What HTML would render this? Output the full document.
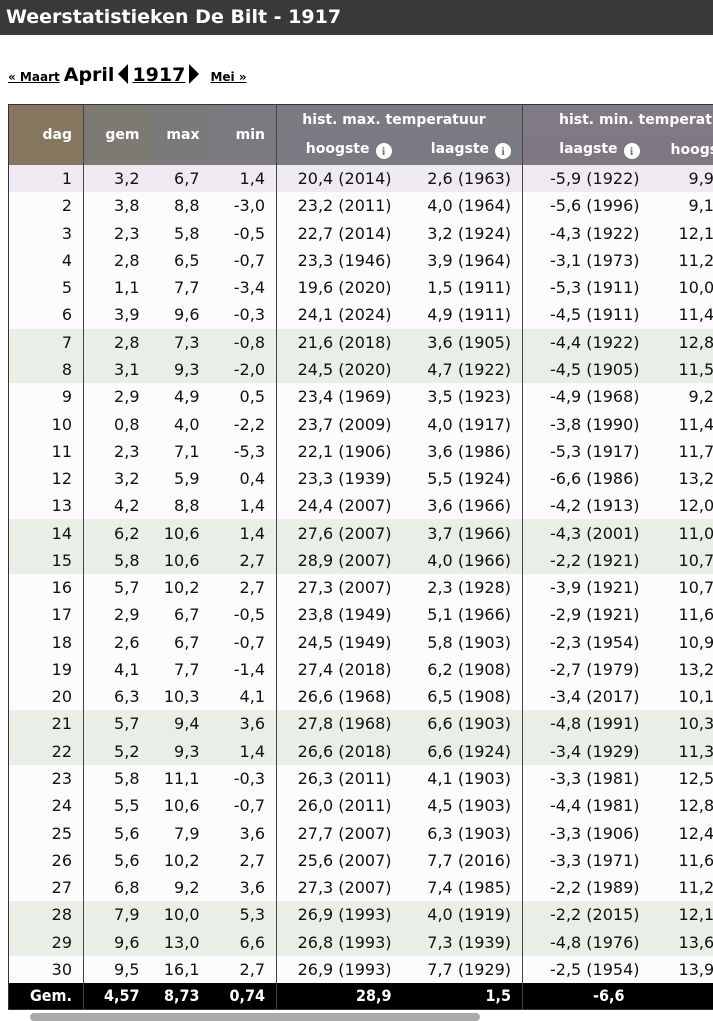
<!DOCTYPE html>
<html><head><meta charset="utf-8"><style>
body{margin:0;width:713px;height:1018px;overflow:hidden;background:#fff;font-family:"DejaVu Sans",Verdana,sans-serif;position:relative}
.top{height:35px;background:#393939;color:#fff;font-weight:bold;font-size:19px;line-height:34px;padding-left:6px;white-space:nowrap}
.nav{position:absolute;top:64px;left:8px;white-space:nowrap;font-weight:bold}
.nav a{color:#000;text-decoration:underline;font-size:12px}
.nav .m{font-size:19px;margin:0 4px 0 4px}
.tri{display:inline-block;width:0;height:0;border-top:10px solid transparent;border-bottom:10px solid transparent;vertical-align:-3px}
.yr{font-size:19px;text-decoration:underline;margin:0 4px}
table{position:absolute;top:104px;left:8px;border-collapse:collapse;font-size:16px;color:#111;table-layout:fixed;width:760px;border:1px solid #333}
td,th{padding:0 11px 0 0;text-align:right;white-space:nowrap}
thead th{color:#fff;font-size:14px;font-weight:bold;height:30px;background:#7c7a80}
tbody td{height:27.28px;line-height:27px}
tbody tr{background:#fdfbfd}
tbody tr.w{background:#e9eee6}
tbody tr.s{background:#efeaf2}
.b{border-left:1px solid #444}
.i{display:inline-block;width:16px;height:16px;border-radius:50%;background:#fff;color:#777;font-size:12px;line-height:16px;text-align:center;font-family:"Liberation Serif",serif;font-weight:bold;margin-left:6px;vertical-align:-2px}
tfoot td{background:#000;color:#fff;font-weight:bold;height:26px;font-stretch:condensed;font-size:16px}
.sb{position:absolute;left:30px;top:1013px;width:450px;height:8px;background:#aaa;border-radius:4px}
</style></head><body>
<div class="top">Weerstatistieken De Bilt - 1917</div>
<div class="nav"><a>« Maart</a><span class="m">April</span><span class="tri" style="border-right:10px solid #000"></span><span class="yr">1917</span><span class="tri" style="border-left:10px solid #000"></span>&nbsp; <a>Mei »</a></div>
<table>
<colgroup><col style="width:75px"><col style="width:67px"><col style="width:60px"><col style="width:66px"><col style="width:126px"><col style="width:120px"><col style="width:128px"><col style="width:118px"></colgroup>
<thead>
<tr><th rowspan="2" style="background:#85765f">dag</th><th rowspan="2" class="b" style="background:#7d7a74">gem</th><th rowspan="2" style="background:#7a7a7c">max</th><th rowspan="2" style="background:#7a7a80">min</th><th colspan="2" class="b" style="text-align:center;background:#7c7b82">hist. max. temperatuur</th><th colspan="2" class="b" style="text-align:left;padding-left:36px;background:#807a84">hist. min. temperatuur</th></tr>
<tr><th class="b" style="background:#7a7a82">hoogste<span class="i">i</span></th><th style="background:#7a7a82">laagste<span class="i">i</span></th><th class="b" style="background:#7f7884">laagste<span class="i">i</span></th><th style="text-align:left;padding-left:20px;background:#7f7884">hoogste</th></tr>
</thead>
<tbody>
<tr class="s"><td>1</td><td class="b">3,2</td><td>6,7</td><td>1,4</td><td class="b">20,4 (2014)</td><td>2,6 (1963)</td><td class="b">-5,9 (1922)</td><td style="text-align:left;padding-left:38px">9,9</td></tr>
<tr><td>2</td><td class="b">3,8</td><td>8,8</td><td>-3,0</td><td class="b">23,2 (2011)</td><td>4,0 (1964)</td><td class="b">-5,6 (1996)</td><td style="text-align:left;padding-left:38px">9,1</td></tr>
<tr><td>3</td><td class="b">2,3</td><td>5,8</td><td>-0,5</td><td class="b">22,7 (2014)</td><td>3,2 (1924)</td><td class="b">-4,3 (1922)</td><td style="text-align:left;padding-left:28px">12,1</td></tr>
<tr><td>4</td><td class="b">2,8</td><td>6,5</td><td>-0,7</td><td class="b">23,3 (1946)</td><td>3,9 (1964)</td><td class="b">-3,1 (1973)</td><td style="text-align:left;padding-left:28px">11,2</td></tr>
<tr><td>5</td><td class="b">1,1</td><td>7,7</td><td>-3,4</td><td class="b">19,6 (2020)</td><td>1,5 (1911)</td><td class="b">-5,3 (1911)</td><td style="text-align:left;padding-left:28px">10,0</td></tr>
<tr><td>6</td><td class="b">3,9</td><td>9,6</td><td>-0,3</td><td class="b">24,1 (2024)</td><td>4,9 (1911)</td><td class="b">-4,5 (1911)</td><td style="text-align:left;padding-left:28px">11,4</td></tr>
<tr class="w"><td>7</td><td class="b">2,8</td><td>7,3</td><td>-0,8</td><td class="b">21,6 (2018)</td><td>3,6 (1905)</td><td class="b">-4,4 (1922)</td><td style="text-align:left;padding-left:28px">12,8</td></tr>
<tr class="w"><td>8</td><td class="b">3,1</td><td>9,3</td><td>-2,0</td><td class="b">24,5 (2020)</td><td>4,7 (1922)</td><td class="b">-4,5 (1905)</td><td style="text-align:left;padding-left:28px">11,5</td></tr>
<tr><td>9</td><td class="b">2,9</td><td>4,9</td><td>0,5</td><td class="b">23,4 (1969)</td><td>3,5 (1923)</td><td class="b">-4,9 (1968)</td><td style="text-align:left;padding-left:38px">9,2</td></tr>
<tr><td>10</td><td class="b">0,8</td><td>4,0</td><td>-2,2</td><td class="b">23,7 (2009)</td><td>4,0 (1917)</td><td class="b">-3,8 (1990)</td><td style="text-align:left;padding-left:28px">11,4</td></tr>
<tr><td>11</td><td class="b">2,3</td><td>7,1</td><td>-5,3</td><td class="b">22,1 (1906)</td><td>3,6 (1986)</td><td class="b">-5,3 (1917)</td><td style="text-align:left;padding-left:28px">11,7</td></tr>
<tr><td>12</td><td class="b">3,2</td><td>5,9</td><td>0,4</td><td class="b">23,3 (1939)</td><td>5,5 (1924)</td><td class="b">-6,6 (1986)</td><td style="text-align:left;padding-left:28px">13,2</td></tr>
<tr><td>13</td><td class="b">4,2</td><td>8,8</td><td>1,4</td><td class="b">24,4 (2007)</td><td>3,6 (1966)</td><td class="b">-4,2 (1913)</td><td style="text-align:left;padding-left:28px">12,0</td></tr>
<tr class="w"><td>14</td><td class="b">6,2</td><td>10,6</td><td>1,4</td><td class="b">27,6 (2007)</td><td>3,7 (1966)</td><td class="b">-4,3 (2001)</td><td style="text-align:left;padding-left:28px">11,0</td></tr>
<tr class="w"><td>15</td><td class="b">5,8</td><td>10,6</td><td>2,7</td><td class="b">28,9 (2007)</td><td>4,0 (1966)</td><td class="b">-2,2 (1921)</td><td style="text-align:left;padding-left:28px">10,7</td></tr>
<tr><td>16</td><td class="b">5,7</td><td>10,2</td><td>2,7</td><td class="b">27,3 (2007)</td><td>2,3 (1928)</td><td class="b">-3,9 (1921)</td><td style="text-align:left;padding-left:28px">10,7</td></tr>
<tr><td>17</td><td class="b">2,9</td><td>6,7</td><td>-0,5</td><td class="b">23,8 (1949)</td><td>5,1 (1966)</td><td class="b">-2,9 (1921)</td><td style="text-align:left;padding-left:28px">11,6</td></tr>
<tr><td>18</td><td class="b">2,6</td><td>6,7</td><td>-0,7</td><td class="b">24,5 (1949)</td><td>5,8 (1903)</td><td class="b">-2,3 (1954)</td><td style="text-align:left;padding-left:28px">10,9</td></tr>
<tr><td>19</td><td class="b">4,1</td><td>7,7</td><td>-1,4</td><td class="b">27,4 (2018)</td><td>6,2 (1908)</td><td class="b">-2,7 (1979)</td><td style="text-align:left;padding-left:28px">13,2</td></tr>
<tr><td>20</td><td class="b">6,3</td><td>10,3</td><td>4,1</td><td class="b">26,6 (1968)</td><td>6,5 (1908)</td><td class="b">-3,4 (2017)</td><td style="text-align:left;padding-left:28px">10,1</td></tr>
<tr class="w"><td>21</td><td class="b">5,7</td><td>9,4</td><td>3,6</td><td class="b">27,8 (1968)</td><td>6,6 (1903)</td><td class="b">-4,8 (1991)</td><td style="text-align:left;padding-left:28px">10,3</td></tr>
<tr class="w"><td>22</td><td class="b">5,2</td><td>9,3</td><td>1,4</td><td class="b">26,6 (2018)</td><td>6,6 (1924)</td><td class="b">-3,4 (1929)</td><td style="text-align:left;padding-left:28px">11,3</td></tr>
<tr><td>23</td><td class="b">5,8</td><td>11,1</td><td>-0,3</td><td class="b">26,3 (2011)</td><td>4,1 (1903)</td><td class="b">-3,3 (1981)</td><td style="text-align:left;padding-left:28px">12,5</td></tr>
<tr><td>24</td><td class="b">5,5</td><td>10,6</td><td>-0,7</td><td class="b">26,0 (2011)</td><td>4,5 (1903)</td><td class="b">-4,4 (1981)</td><td style="text-align:left;padding-left:28px">12,8</td></tr>
<tr><td>25</td><td class="b">5,6</td><td>7,9</td><td>3,6</td><td class="b">27,7 (2007)</td><td>6,3 (1903)</td><td class="b">-3,3 (1906)</td><td style="text-align:left;padding-left:28px">12,4</td></tr>
<tr><td>26</td><td class="b">5,6</td><td>10,2</td><td>2,7</td><td class="b">25,6 (2007)</td><td>7,7 (2016)</td><td class="b">-3,3 (1971)</td><td style="text-align:left;padding-left:28px">11,6</td></tr>
<tr><td>27</td><td class="b">6,8</td><td>9,2</td><td>3,6</td><td class="b">27,3 (2007)</td><td>7,4 (1985)</td><td class="b">-2,2 (1989)</td><td style="text-align:left;padding-left:28px">11,2</td></tr>
<tr class="w"><td>28</td><td class="b">7,9</td><td>10,0</td><td>5,3</td><td class="b">26,9 (1993)</td><td>4,0 (1919)</td><td class="b">-2,2 (2015)</td><td style="text-align:left;padding-left:28px">12,1</td></tr>
<tr class="w"><td>29</td><td class="b">9,6</td><td>13,0</td><td>6,6</td><td class="b">26,8 (1993)</td><td>7,3 (1939)</td><td class="b">-4,8 (1976)</td><td style="text-align:left;padding-left:28px">13,6</td></tr>
<tr><td>30</td><td class="b">9,5</td><td>16,1</td><td>2,7</td><td class="b">26,9 (1993)</td><td>7,7 (1929)</td><td class="b">-2,5 (1954)</td><td style="text-align:left;padding-left:28px">13,9</td></tr>
</tbody>
<tfoot><tr><td>Gem.</td><td class="b">4,57</td><td>8,73</td><td>0,74</td><td class="b">28,9</td><td>1,5</td><td class="b" style="padding-right:26px">-6,6</td><td></td></tr></tfoot>
</table>
<div class="sb"></div>
</body></html>
